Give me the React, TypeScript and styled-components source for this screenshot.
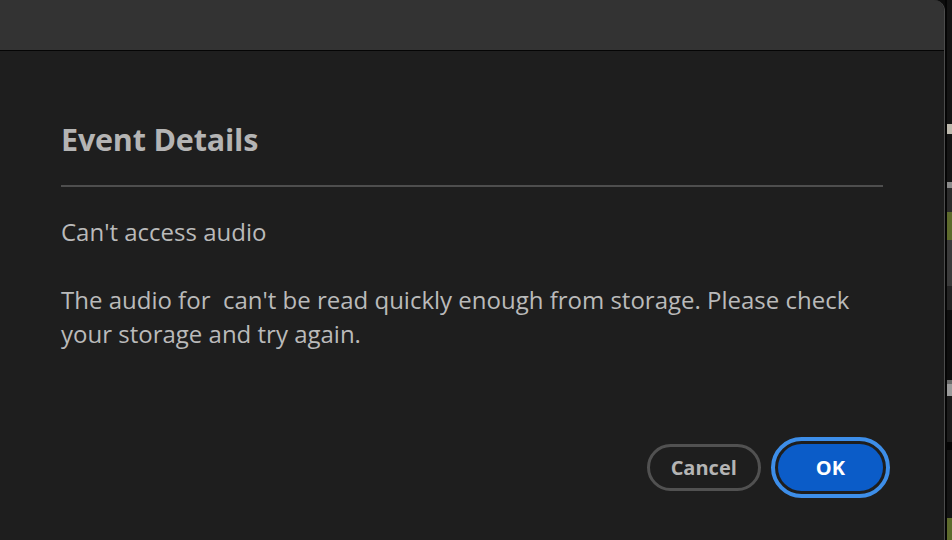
import React from 'react'
import styled, { createGlobalStyle } from 'styled-components'

const GlobalStyle = createGlobalStyle`
  html, body {
    margin: 0;
    padding: 0;
    background: #0c0c0c;
  }
  #root {
    width: 952px;
    height: 540px;
    overflow: hidden;
  }
`

// sliver of the app window behind the dialog
const stripSegments = [
  { h: 124, c: '#141414' },
  { h: 10, c: '#bdb9ad' },
  { h: 48, c: '#151515' },
  { h: 6, c: '#8a8a8a' },
  { h: 24, c: '#2b2b2b' },
  { h: 28, c: '#5d6a2c' },
  { h: 46, c: '#3a3a3a' },
  { h: 24, c: '#232323' },
  { h: 70, c: '#0e0e0e' },
  { h: 4, c: '#6a6a6a' },
  { h: 12, c: '#9a9a9a' },
  { h: 46, c: '#1b1b1b' },
  { h: 8, c: '#050505' },
  { h: 68, c: '#141414' },
  { h: 22, c: '#5d6a2c' },
]

export default function App() {
  return (
    <>
      <GlobalStyle />
      <Screen>
        <Window>
          <TitleBar />
          <Body>
            <Heading>Event Details</Heading>
            <Divider />
            <Message>Can't access audio</Message>
            <Message>
              The audio for&nbsp; can't be read quickly enough from storage. Please check your storage and try again.
            </Message>
            <Footer>
              <Button>Cancel</Button>
              <Button primary>OK</Button>
            </Footer>
          </Body>
        </Window>
        <Strip>
          {stripSegments.map((s, i) => (
            <Segment key={i} style={{ height: s.h, background: s.c }} />
          ))}
        </Strip>
      </Screen>
    </>
  )
}

const Screen = styled.div`
  display: flex;
  width: 952px;
  height: 540px;
  font-family: 'Open Sans', 'Noto Sans', sans-serif;
`

const Window = styled.div`
  flex: 1;
  display: flex;
  flex-direction: column;
  background: #1e1e1e;
  border-right: 1px solid #4c4c4c;
  border-top-right-radius: 11px;
  overflow: hidden;
`

const TitleBar = styled.div`
  height: 50px;
  flex-shrink: 0;
  background: #333333;
  border-bottom: 1px solid #050505;
`

const Body = styled.div`
  flex: 1;
  display: flex;
  flex-direction: column;
  padding: 68px 61px 0 61px;
`

const Heading = styled.h1`
  margin: 0;
  font-size: 30.5px;
  line-height: 40px;
  font-weight: 700;
  color: #b4b4b4;
  letter-spacing: -0.2px;
`

const Divider = styled.div`
  height: 2px;
  background: #4e4e4e;
  margin: 26px 0 28px;
`

const Message = styled.p`
  margin: 0 0 34px;
  font-size: 24px;
  line-height: 34px;
  color: #bababa;
`

const Footer = styled.div`
  display: flex;
  justify-content: flex-end;
  align-items: center;
  gap: 17px;
  margin-top: 59px;
`

const Button = styled.button<{ primary?: boolean }>`
  height: 47px;
  padding: 0 ${(p) => (p.primary ? '38px' : '21px')};
  border-radius: 24px;
  font-family: inherit;
  font-size: 20px;
  font-weight: 700;
  cursor: pointer;
  color: ${(p) => (p.primary ? '#ffffff' : '#b4b4b4')};
  background: ${(p) => (p.primary ? '#0b5cc8' : 'transparent')};
  border: ${(p) => (p.primary ? 'none' : '3px solid #515151')};
  outline: ${(p) => (p.primary ? '4px solid #3d8ee9' : 'none')};
  outline-offset: 3px;
`

const Strip = styled.div`
  width: 5px;
  display: flex;
  flex-direction: column;
  border-left: 2px solid #050505;
`

const Segment = styled.div`
  flex-shrink: 0;
`
